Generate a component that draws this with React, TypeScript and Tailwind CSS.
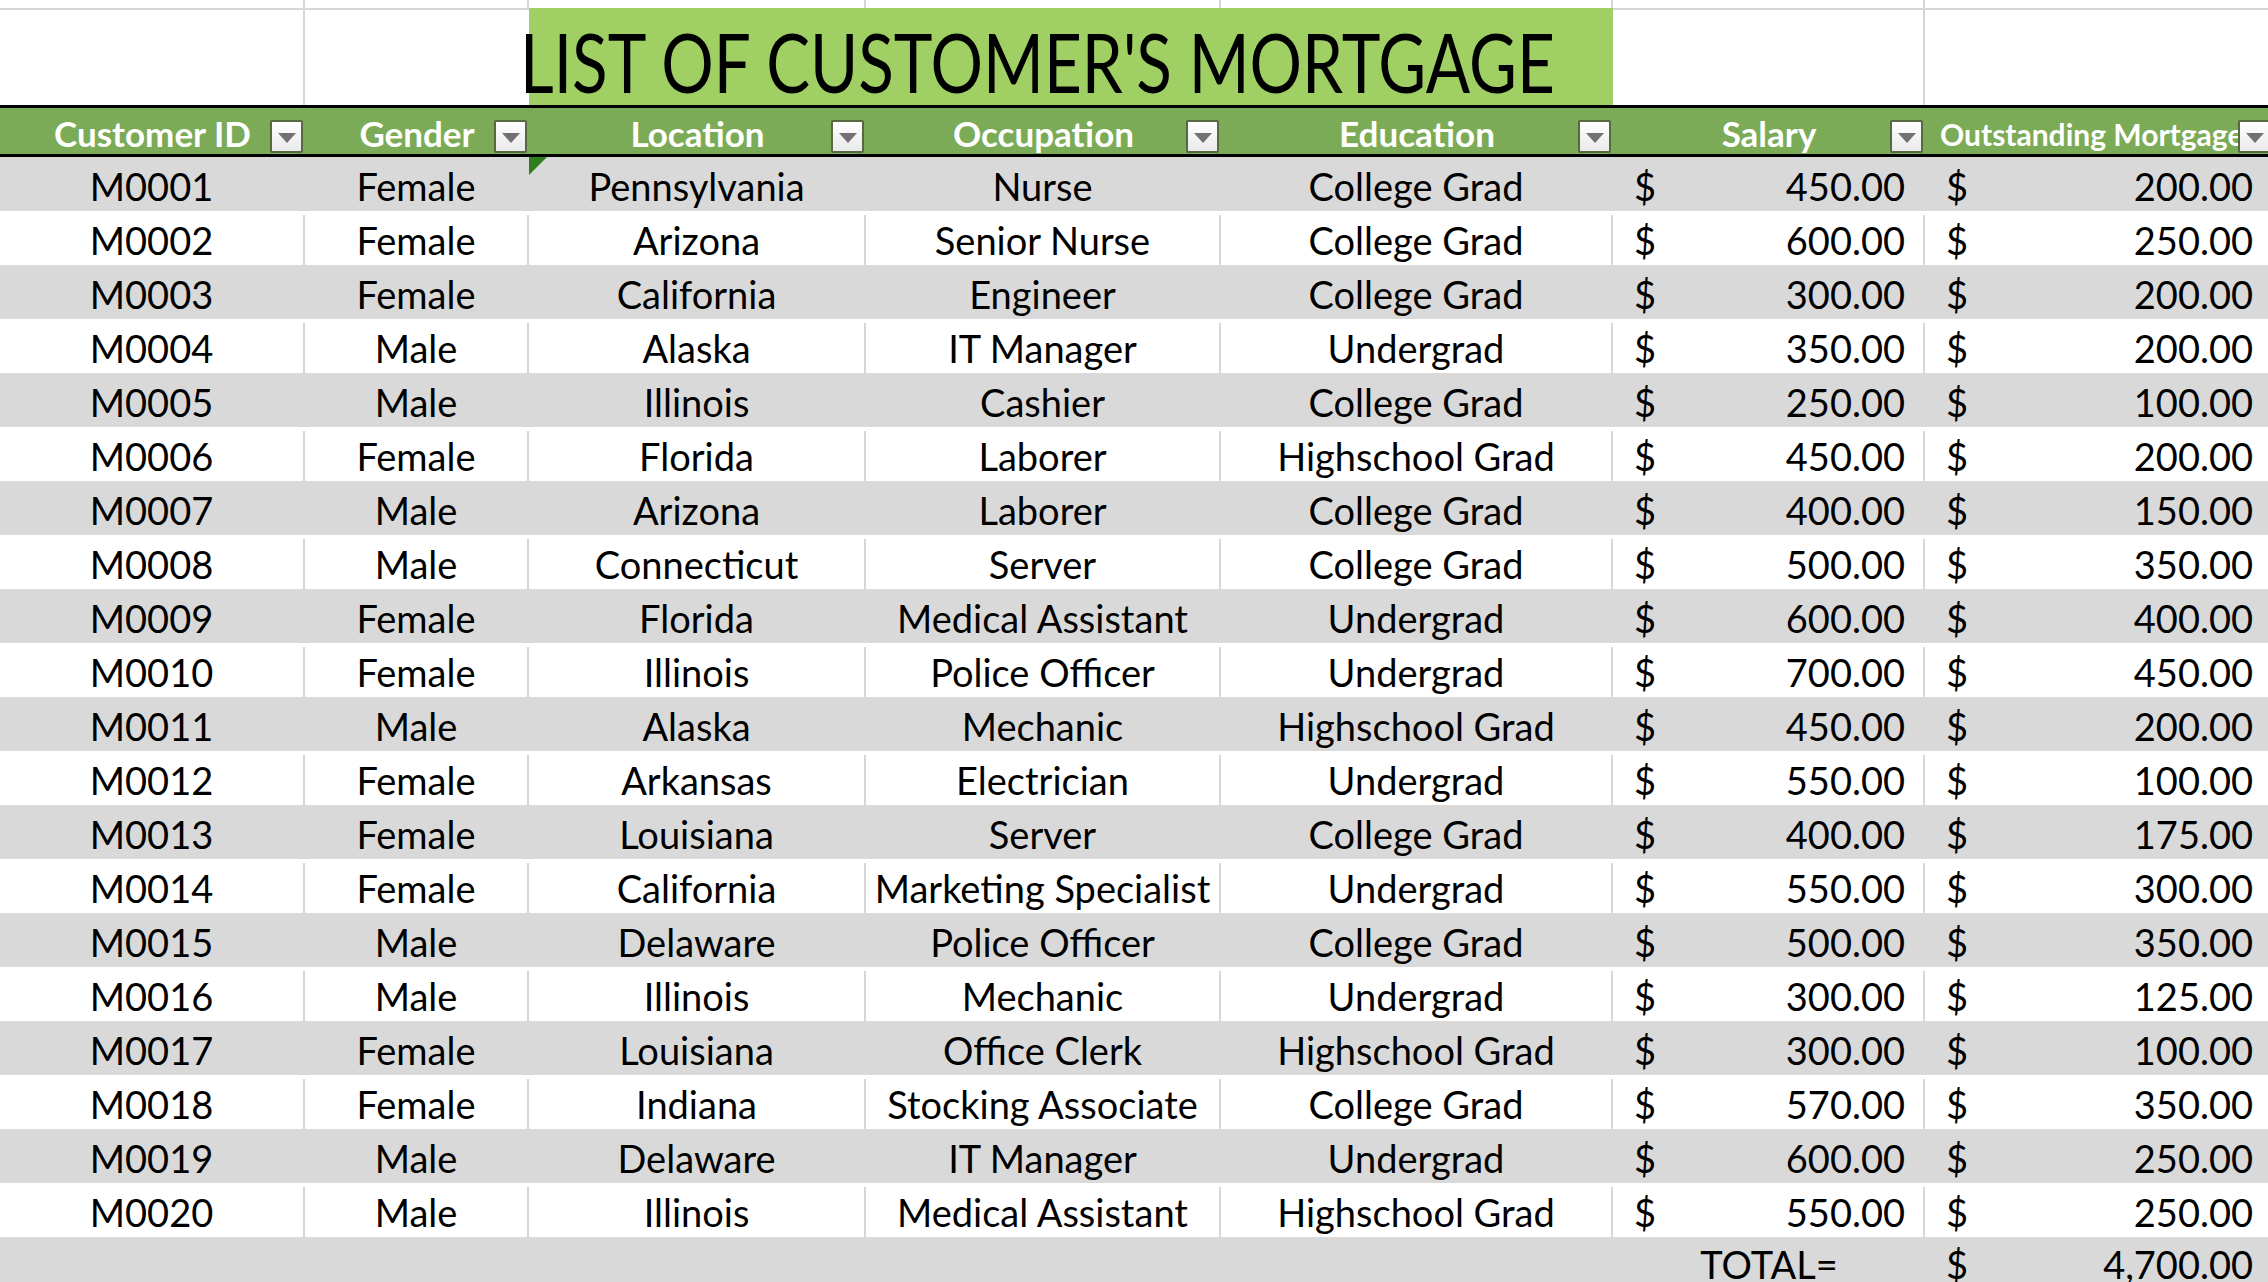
import React from 'react';

type Row = [string, string, string, string, string, string, string];

const rows: Row[] = [
  ['M0001', 'Female', 'Pennsylvania', 'Nurse', 'College Grad', '450.00', '200.00'],
  ['M0002', 'Female', 'Arizona', 'Senior Nurse', 'College Grad', '600.00', '250.00'],
  ['M0003', 'Female', 'California', 'Engineer', 'College Grad', '300.00', '200.00'],
  ['M0004', 'Male', 'Alaska', 'IT Manager', 'Undergrad', '350.00', '200.00'],
  ['M0005', 'Male', 'Illinois', 'Cashier', 'College Grad', '250.00', '100.00'],
  ['M0006', 'Female', 'Florida', 'Laborer', 'Highschool Grad', '450.00', '200.00'],
  ['M0007', 'Male', 'Arizona', 'Laborer', 'College Grad', '400.00', '150.00'],
  ['M0008', 'Male', 'Connecticut', 'Server', 'College Grad', '500.00', '350.00'],
  ['M0009', 'Female', 'Florida', 'Medical Assistant', 'Undergrad', '600.00', '400.00'],
  ['M0010', 'Female', 'Illinois', 'Police Officer', 'Undergrad', '700.00', '450.00'],
  ['M0011', 'Male', 'Alaska', 'Mechanic', 'Highschool Grad', '450.00', '200.00'],
  ['M0012', 'Female', 'Arkansas', 'Electrician', 'Undergrad', '550.00', '100.00'],
  ['M0013', 'Female', 'Louisiana', 'Server', 'College Grad', '400.00', '175.00'],
  ['M0014', 'Female', 'California', 'Marketing Specialist', 'Undergrad', '550.00', '300.00'],
  ['M0015', 'Male', 'Delaware', 'Police Officer', 'College Grad', '500.00', '350.00'],
  ['M0016', 'Male', 'Illinois', 'Mechanic', 'Undergrad', '300.00', '125.00'],
  ['M0017', 'Female', 'Louisiana', 'Office Clerk', 'Highschool Grad', '300.00', '100.00'],
  ['M0018', 'Female', 'Indiana', 'Stocking Associate', 'College Grad', '570.00', '350.00'],
  ['M0019', 'Male', 'Delaware', 'IT Manager', 'Undergrad', '600.00', '250.00'],
  ['M0020', 'Male', 'Illinois', 'Medical Assistant', 'Highschool Grad', '550.00', '250.00'],
];

const cols = 'grid grid-cols-[305px_224px_337px_355px_392px_312px_348px]';

function FilterButton() {
  return (
    <span className="absolute right-[2px] bottom-[1px] flex h-[33px] w-[33px] items-center justify-center rounded-[2px] border-2 border-[#56693f] bg-gradient-to-b from-white to-[#e9e9e9]">
      <svg width="18" height="10" viewBox="0 0 18 10" className="mt-[2px]">
        <path d="M0 0H18L9 10Z" fill="#727272" />
      </svg>
    </span>
  );
}

function HeaderCell({ label }: { label: string }) {
  return (
    <div className="relative h-full text-center">
      <span className="block pt-[4px] leading-[42px]">{label}</span>
      <FilterButton />
    </div>
  );
}

function Money({ value, line }: { value: string; line: string }) {
  return (
    <div className={`flex justify-between border-r-2 pl-[21px] pr-[18px] ${line}`}>
      <span>$</span>
      <span>{value}</span>
    </div>
  );
}

export default function App() {
  return (
    <div className="h-[1282px] w-[2268px] overflow-hidden bg-white font-['Lato',sans-serif] text-black">
      <div className="w-[2273px]">
        <div className={`${cols} h-[8px]`}>
          {[0, 1, 2, 3, 4, 5, 6].map(i => (
            <div key={i} className="border-r-2 border-[#d6d6d6]" />
          ))}
        </div>

        <div className={`${cols} h-[97px]`}>
          <div className="border-t-2 border-r-2 border-[#d6d6d6]" />
          <div className="border-t-2 border-[#d6d6d6]" />
          <div className="col-span-3 flex items-end bg-[#a0cf63] pb-[3px]">
            <h1 className="-ml-[9px] origin-left scale-x-[0.81] whitespace-nowrap text-[81px] leading-none font-normal">
              LIST OF CUSTOMER'S MORTGAGE
            </h1>
          </div>
          <div className="border-t-2 border-r-2 border-[#d6d6d6]" />
          <div className="border-t-2 border-[#d6d6d6]" />
        </div>

        <div className={`${cols} h-[52px] border-y-[3px] border-black bg-[#7bab56] text-[35px] font-bold text-white`}>
          <HeaderCell label="Customer ID" />
          <HeaderCell label="Gender" />
          <HeaderCell label="Location" />
          <HeaderCell label="Occupation" />
          <HeaderCell label="Education" />
          <HeaderCell label="Salary" />
          <div className="relative h-full overflow-hidden">
            <span className="block whitespace-nowrap pl-[15px] pt-[6px] text-[30px] leading-[40px]">
              Outstanding Mortgage
            </span>
            <FilterButton />
          </div>
        </div>

        {rows.map((r, i) => {
          const shaded = i % 2 === 0;
          const line = shaded ? 'border-transparent' : 'border-[#d6d6d6]';
          return (
            <div
              key={r[0]}
              className={`${cols} h-[54px] pt-[4px] text-[38px] leading-[50px] ${shaded ? 'bg-[#d9d9d9]' : 'bg-white'}`}
            >
              <div className={`border-r-2 text-center ${line}`}>{r[0]}</div>
              <div className={`border-r-2 text-center ${line}`}>{r[1]}</div>
              <div className={`relative border-r-2 text-center ${line}`}>
                {i === 0 && (
                  <svg width="18" height="18" viewBox="0 0 18 18" className="absolute left-0 top-[-4px]">
                    <path d="M0 0H18L0 18Z" fill="#2e7d1f" />
                  </svg>
                )}
                {r[2]}
              </div>
              <div className={`whitespace-nowrap border-r-2 text-center ${line}`}>{r[3]}</div>
              <div className={`border-r-2 text-center ${line}`}>{r[4]}</div>
              <Money value={r[5]} line={line} />
              <Money value={r[6]} line={line} />
            </div>
          );
        })}

        <div className={`${cols} h-[54px] bg-[#d9d9d9] pt-[2px] text-[38px] leading-[50px]`}>
          <div />
          <div />
          <div />
          <div />
          <div />
          <div className="text-center">TOTAL=</div>
          <Money value="4,700.00" line="border-transparent" />
        </div>
      </div>
    </div>
  );
}
